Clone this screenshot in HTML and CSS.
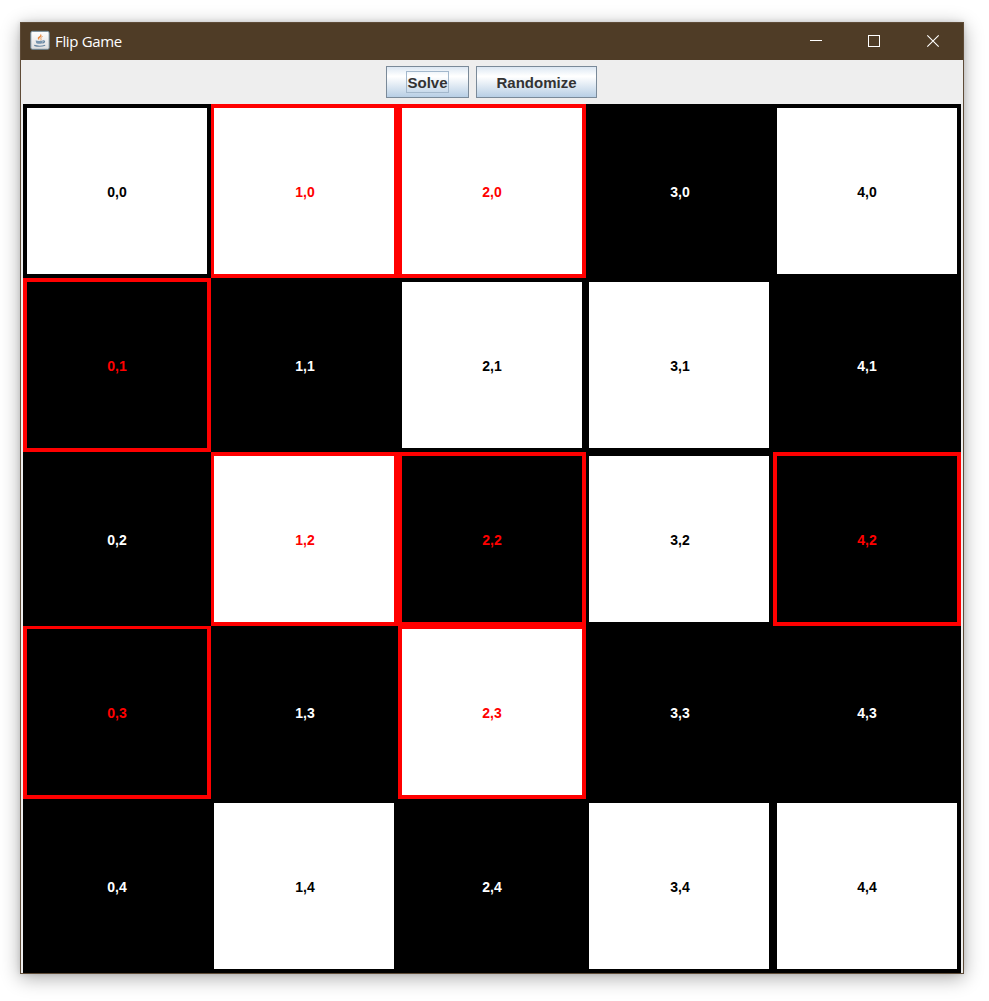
FILE: index.html
```html
<!DOCTYPE html>
<html lang="en">
<head>
<meta charset="utf-8">
<title>Flip Game</title>
<link rel="stylesheet" href="styles.css">
</head>
<body>
<div class="window">
  <header class="titlebar">
    <svg class="app-icon" width="20" height="20" viewBox="0 0 20 20">
      <defs><linearGradient id="tile" x1="0" y1="0" x2="0" y2="1"><stop offset="0" stop-color="#fff"/><stop offset="1" stop-color="#dedede"/></linearGradient></defs>
      <rect x=".8" y="1.300" width="18.400" height="18" rx="1.600" fill="url(#tile)" stroke="#6f8796"/>
      <path d="M9.300 10.200C7 8.400 7.600 7.300 9.400 6.200 10.500 5.500 10.700 4.900 10.500 3.800c1.700 1.400 1 2.500-.1 3.400-1.200 1-1.500 1.600-1.100 3Z" fill="#e8873a"/>
      <path d="M12.600 6.500c-2 .8-2.300 1.400-1.600 2.200.4.600.2 1-.5 1.500" fill="none" stroke="#e8975a"/>
      <path d="M5.600 10.600q3.500.9 7.300 0l-.6 2.600q-2.800 1.200-6 0Z" fill="#7794ad"/>
      <path d="M12.900 11c2.300-.5 2.200 1.600-.5 2.200M4.200 15.400q5.500 1.700 11-.1" fill="none" stroke="#6685a0" stroke-width="1.200"/>
    </svg>
    <span class="title">Flip Game</span>
    <svg class="controls" width="174" height="38" viewBox="0 0 174 38">
      <path d="M23 18.500h12" stroke="#fff"/>
      <rect x="81.500" y="13.500" width="11" height="11" fill="none" stroke="#fff"/>
      <path d="M140.300 13.300l11.400 11.400M151.700 13.300l-11.400 11.400" stroke="#fff" stroke-width="1.100"/>
    </svg>
  </header>
  <div class="toolbar">
    <button class="btn solve"><span class="focus">Solve</span></button>
    <button class="btn randomize">Randomize</button>
  </div>
  <main class="board">
    <div class="cell light">0,0</div><div class="cell light marked">1,0</div><div class="cell light marked">2,0</div><div class="cell dark">3,0</div><div class="cell light">4,0</div>
    <div class="cell dark marked">0,1</div><div class="cell dark">1,1</div><div class="cell light">2,1</div><div class="cell light">3,1</div><div class="cell dark">4,1</div>
    <div class="cell dark">0,2</div><div class="cell light marked">1,2</div><div class="cell dark marked">2,2</div><div class="cell light">3,2</div><div class="cell dark marked">4,2</div>
    <div class="cell dark marked">0,3</div><div class="cell dark">1,3</div><div class="cell light marked">2,3</div><div class="cell dark">3,3</div><div class="cell dark">4,3</div>
    <div class="cell dark">0,4</div><div class="cell light">1,4</div><div class="cell dark">2,4</div><div class="cell light">3,4</div><div class="cell light">4,4</div>
  </main>
</div>
</body>
</html>
```
FILE: styles.css
```css
* { box-sizing: border-box; }
body {
  margin: 0;
  padding: 22px 25px 27px 20px;
  height: 1001px;
  overflow: hidden;
  background: #fff;
}
.window {
  width: 944px;
  height: 952px;
  border: 1px solid #5e4b37;
  background: #eee;
  box-shadow: 0 4px 18px rgba(0, 0, 0, .33), 0 0 5px rgba(0, 0, 0, .12);
}
.titlebar {
  display: flex;
  height: 37px;
  padding: 0 2px 0 9px;
  background: #4f3c26;
}
.app-icon { margin-top: 7px; }
.title {
  margin-left: 5px;
  font: 15px/37px "Open Sans", "Noto Sans", sans-serif;
  letter-spacing: -.35px;
  color: #fff;
}
.controls {
  margin: -1px 0 0 auto;
  flex: none;
}
.toolbar {
  display: flex;
  justify-content: center;
  gap: 7px;
  height: 44px;
  padding: 6px 2px 0 0;
}
.btn {
  display: flex;
  align-items: center;
  justify-content: center;
  height: 32px;
  padding: 0;
  border: 1px solid #7a8a99;
  background: linear-gradient(#dde8f3 0%, #fff 30%, #fff 32%, #b8cfe5 100%);
  font: bold 15px/20px "Liberation Sans", Arial, sans-serif;
  color: #333;
}
.solve { width: 83px; }
.randomize {
  width: 121px;
  padding: 2px 0 0 1px;
}
.focus {
  width: 43px;
  height: 22px;
  padding-left: 1px;
  border: 1px solid #a3b8cc;
  line-height: 22px;
  text-align: left;
}
.board {
  display: grid;
  grid-template-columns: 188px 187px 188px 187px 188px;
  grid-template-rows: 174px 174px 174px 173px 174px;
  width: 938px;
  margin-left: 2px;
}
.cell {
  display: flex;
  align-items: center;
  justify-content: center;
  padding-top: 2px;
  border: 4px solid #000;
  font: bold 14px/16px "Liberation Sans", Arial, sans-serif;
}
.cell:nth-child(5n + 2),
.cell:nth-child(5n + 4) {
  padding-left: 2px;
  border-left-width: 3px;
}
.cell:nth-child(n + 16):nth-child(-n + 20) { border-top-width: 3px; }
.light { background: #fff; color: #000; }
.dark { background: #000; color: #fff; }
.marked { border-color: #f00; color: #f00; }
```
